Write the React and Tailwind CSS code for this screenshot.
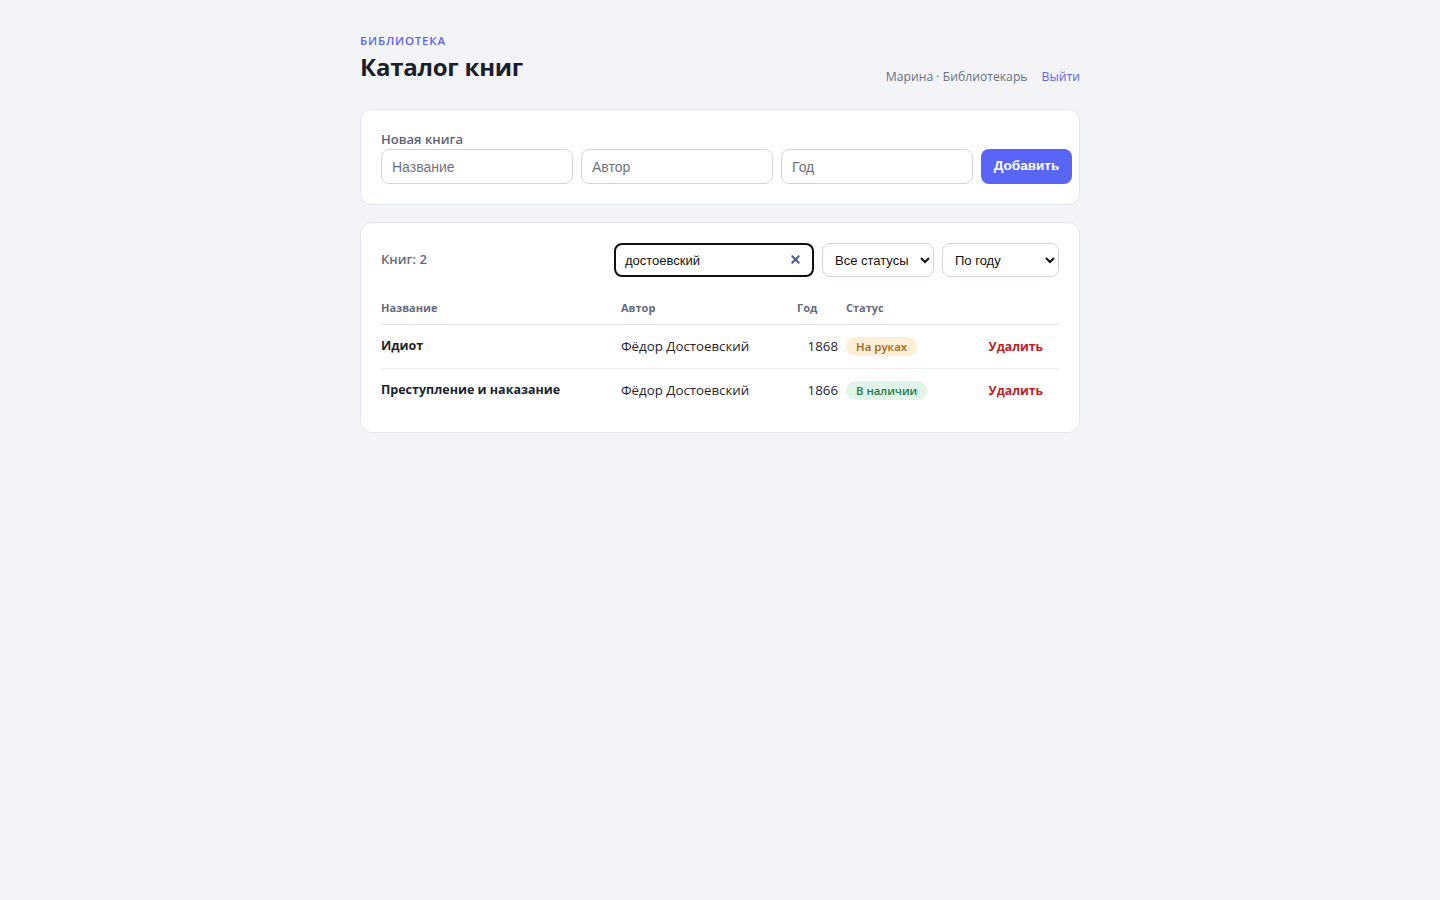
import { useState } from "react";
import { X } from "lucide-react";

const books = [
  { id: 1, title: "Идиот", author: "Фёдор Достоевский", year: 1868, status: "out" },
  { id: 2, title: "Преступление и наказание", author: "Фёдор Достоевский", year: 1866, status: "in" },
];

function StatusBadge({ status }) {
  if (status === "out") {
    return (
      <span className="inline-block rounded-full bg-[#fdefd6] px-[10px] py-[1px] align-middle text-[11.5px] font-semibold leading-[17px] text-[#a3661a]">
        На руках
      </span>
    );
  }
  return (
    <span className="inline-block rounded-full bg-[#e0f5e8] px-[10px] py-[1px] align-middle text-[11.3px] font-semibold leading-[17px] text-[#1d7a45]">
      В наличии
    </span>
  );
}

export default function App() {
  const [query, setQuery] = useState("достоевский");

  return (
    <div className="min-h-screen bg-[#f3f4f8] font-['Open_Sans',sans-serif] text-[#1d2230]">
      <div className="mx-auto w-[720px] pt-[33px]">
        <div className="flex items-end justify-between">
          <div>
            <div className="text-[11.5px] font-semibold uppercase leading-4 tracking-[0.07em] text-[#5b63f0]">
              Библиотека
            </div>
            <h1 className="mt-[2px] text-[24px] font-bold leading-8 tracking-[-0.01em] text-[#1a1f2c]">
              Каталог книг
            </h1>
          </div>
          <div className="-mb-[4px] flex items-center gap-[14px] text-[12.2px] leading-5">
            <span className="text-[#6b7180]">Марина · Библиотекарь</span>
            <a href="#" className="text-[#6366f1]">
              Выйти
            </a>
          </div>
        </div>

        {/* форма добавления */}
        <div className="mt-[26px] rounded-xl border border-[#e3e6ee] bg-white px-5 pb-5 pt-5">
          <div className="text-[13px] font-semibold leading-[19px] text-[#5b6275]">Новая книга</div>
          <div className="flex gap-2">
            <input
              placeholder="Название"
              className="h-[35px] w-[192px] shrink-0 rounded-lg border border-[#cfd4e0] bg-white px-[10px] font-['Liberation_Sans',sans-serif] text-[14px] placeholder:text-[#6e7280]"
            />
            <input
              placeholder="Автор"
              className="h-[35px] w-[192px] shrink-0 rounded-lg border border-[#cfd4e0] bg-white px-[10px] font-['Liberation_Sans',sans-serif] text-[14px] placeholder:text-[#6e7280]"
            />
            <input
              placeholder="Год"
              className="h-[35px] w-[192px] shrink-0 rounded-lg border border-[#cfd4e0] bg-white px-[10px] font-['Liberation_Sans',sans-serif] text-[14px] placeholder:text-[#6e7280]"
            />
            <button className="h-[35px] w-[91px] shrink-0 rounded-lg bg-[#5865f6] font-['Liberation_Sans',sans-serif] text-[13.5px] font-bold text-white">
              Добавить
            </button>
          </div>
        </div>

        {/* список */}
        <div className="mt-[17px] rounded-xl border border-[#e3e6ee] bg-white px-5 pb-[19px] pt-5">
          <div className="flex items-center gap-2">
            <div className="flex-1 text-[13px] font-semibold text-[#636a7c]">Книг: {books.length}</div>
            <div className="relative w-[200px]">
              <input
                value={query}
                onChange={(e) => setQuery(e.target.value)}
                className="h-[34px] w-full rounded-lg border-2 border-[#111] bg-white pl-[9px] pr-7 font-['Liberation_Sans',sans-serif] text-[13px] text-[#111] outline-none"
              />
              <X
                size={13}
                strokeWidth={3.5}
                className="absolute right-[12px] top-[10px] text-[#3f5d8f]"
              />
            </div>
            <select className="h-[34px] w-[112px] rounded-lg border border-[#cfd4e0] bg-white pl-[8px] pr-1 font-['Liberation_Sans',sans-serif] text-[13px] text-[#111]">
              <option>Все статусы</option>
              <option>В наличии</option>
              <option>На руках</option>
            </select>
            <select className="h-[34px] w-[117px] rounded-lg border border-[#cfd4e0] bg-white pl-[8px] pr-1 font-['Liberation_Sans',sans-serif] text-[13px] text-[#111]">
              <option>По году</option>
              <option>По названию</option>
            </select>
          </div>

          <table className="mt-4 w-full table-fixed border-collapse text-left">
            <colgroup>
              <col className="w-[240px]" />
              <col className="w-[176px]" />
              <col className="w-[49px]" />
              <col className="w-[120px]" />
              <col />
            </colgroup>
            <thead>
              <tr className="border-b border-[#e3e5ec] text-[11px] font-bold text-[#646b7d]">
                <th className="pb-[8px] pt-[7px] font-bold leading-4">Название</th>
                <th className="pb-[8px] pt-[7px] font-bold leading-4">Автор</th>
                <th className="pb-[8px] pt-[7px] font-bold leading-4">Год</th>
                <th className="pb-[8px] pt-[7px] font-bold leading-4">Статус</th>
                <th className="pb-[8px] pt-[7px]"></th>
              </tr>
            </thead>
            <tbody>
              {books.map((book, index) => (
                <tr
                  key={book.id}
                  className={index < books.length - 1 ? "h-[44px] border-b border-[#eef0f4]" : "h-[44px]"}
                >
                  <td className="text-[12.5px] font-bold text-[#1b1f2a]">{book.title}</td>
                  <td className="text-[13.3px] text-[#1f2430]">{book.author}</td>
                  <td className="pr-2 text-right text-[13.3px] text-[#1f2430]">{book.year}</td>
                  <td className="leading-none">
                    <StatusBadge status={book.status} />
                  </td>
                  <td className="pr-4">
                    <button className="ml-auto block text-[12.2px] font-bold leading-5 text-[#c0201f]">
                      Удалить
                    </button>
                  </td>
                </tr>
              ))}
            </tbody>
          </table>
        </div>
      </div>
    </div>
  );
}
